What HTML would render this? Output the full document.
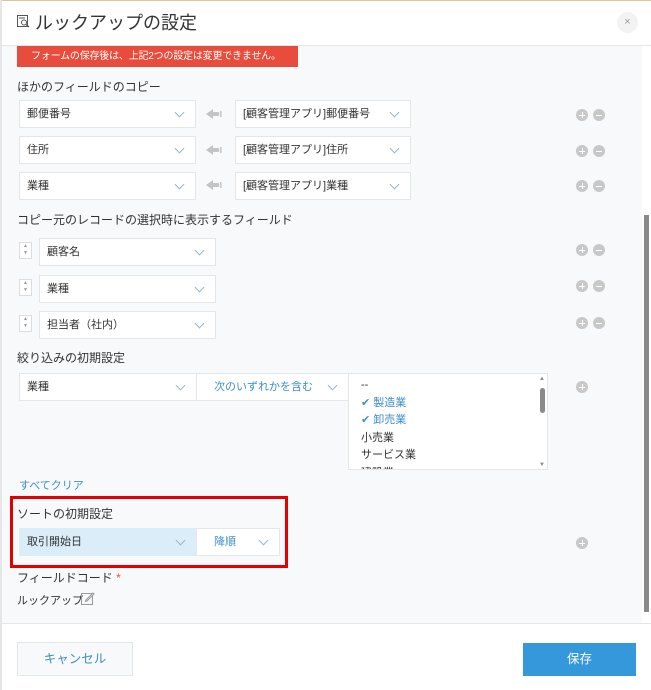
<!DOCTYPE html>
<html><head><meta charset="utf-8"><style>
*{box-sizing:border-box;margin:0;padding:0}
body{width:651px;height:690px;position:relative;overflow:hidden;background:#fff;font-family:"Liberation Sans","Noto Sans CJK JP",sans-serif;color:#333}
.a{position:absolute}
.body{left:2px;top:46px;width:640px;height:577px;background:#f7f9fa}
.lbl{font-size:12px;color:#333;white-space:nowrap}
.sel{position:absolute;background:#fff;border:1px solid #e3e7e8;height:28px;font-size:11px;line-height:26px;padding-left:7px;white-space:nowrap}
.sel:after{content:"";position:absolute;right:12px;top:8px;width:6px;height:6px;border-right:1px solid #9fb4c4;border-bottom:1px solid #9fb4c4;transform:rotate(45deg)}
.ic{position:absolute;width:12px;height:12px;border-radius:50%;background:#c8c8c8}
.ic:before{content:"";position:absolute;left:3px;top:5.5px;width:6px;height:1px;background:#fff}
.p:after{content:"";position:absolute;left:5.5px;top:3px;width:1px;height:6px;background:#fff}
.arr{position:absolute;width:16px;height:10px}
.st{position:absolute;width:13px;height:17px;border:1px solid #ddd;background:#fff;font-size:5px;line-height:7px;text-align:center;color:#999}
</style></head><body>
<div class="a" style="left:0;top:0;width:651px;height:1px;background:#d9c99a"></div>
<div class="a" style="left:0;top:0;width:2px;height:690px;background:#e6e6e6"></div>
<svg class="a" style="left:17px;top:15px" width="14" height="13" viewBox="0 0 14 13"><rect x="0.5" y="0.5" width="10" height="11" fill="none" stroke="#555"/><line x1="2" y1="3" x2="8" y2="3" stroke="#555"/><circle cx="7" cy="7.5" r="2.5" fill="#fff" stroke="#555"/><line x1="9" y1="9.5" x2="12" y2="12" stroke="#555" stroke-width="1.3"/></svg>
<div class="a" style="left:35px;top:9px;font-size:18px;color:#333">ルックアップの設定</div>
<div class="a" style="left:617px;top:12px;width:21px;height:21px;border-radius:50%;background:#f3f3f3;color:#999;font-size:11px;text-align:center;line-height:21px">×</div>
<div class="a" style="left:0;top:45px;width:651px;height:1px;background:#e6e6e6"></div>
<div class="a body"></div>
<div class="a" style="left:642px;top:46px;width:9px;height:577px;background:#fff"></div>
<div class="a" style="left:644px;top:215px;width:5px;height:397px;background:#8a8a8a"></div>
<div class="a" style="left:17px;top:46px;width:281px;height:21px;background:#e74c3c;color:#fff;font-size:10px;line-height:21px;padding-left:14px;white-space:nowrap;letter-spacing:-0.2px">フォームの保存後は、上記2つの設定は変更できません。</div>
<div class="a lbl" style="left:17px;top:78px">ほかのフィールドのコピー</div>

<div class="sel" style="left:19px;top:100px;width:177px">郵便番号</div>
<svg class="arr" style="left:206px;top:109px" viewBox="0 0 16 10"><path d="M0 5 L7 0 V10 Z" fill="#c4c4c4"/><rect x="7" y="3" width="6" height="4" fill="#c4c4c4"/><rect x="14" y="2" width="1.5" height="6" fill="#c4c4c4"/></svg>
<div class="sel" style="left:235px;top:100px;width:176px">[顧客管理アプリ]郵便番号</div>
<div class="ic p" style="left:576px;top:109px"></div><div class="ic" style="left:593px;top:109px"></div>

<div class="sel" style="left:19px;top:136px;width:177px">住所</div>
<svg class="arr" style="left:206px;top:145px" viewBox="0 0 16 10"><path d="M0 5 L7 0 V10 Z" fill="#c4c4c4"/><rect x="7" y="3" width="6" height="4" fill="#c4c4c4"/><rect x="14" y="2" width="1.5" height="6" fill="#c4c4c4"/></svg>
<div class="sel" style="left:235px;top:136px;width:176px">[顧客管理アプリ]住所</div>
<div class="ic p" style="left:576px;top:145px"></div><div class="ic" style="left:593px;top:145px"></div>

<div class="sel" style="left:19px;top:172px;width:177px">業種</div>
<svg class="arr" style="left:206px;top:180px" viewBox="0 0 16 10"><path d="M0 5 L7 0 V10 Z" fill="#c4c4c4"/><rect x="7" y="3" width="6" height="4" fill="#c4c4c4"/><rect x="14" y="2" width="1.5" height="6" fill="#c4c4c4"/></svg>
<div class="sel" style="left:235px;top:172px;width:176px">[顧客管理アプリ]業種</div>
<div class="ic p" style="left:576px;top:180px"></div><div class="ic" style="left:593px;top:180px"></div>

<div class="a lbl" style="left:17px;top:211px">コピー元のレコードの選択時に表示するフィールド</div>
<div class="st" style="left:19px;top:242px">▲<br>▼</div>
<div class="sel" style="left:39px;top:238px;width:177px">顧客名</div>
<div class="ic p" style="left:576px;top:244px"></div><div class="ic" style="left:593px;top:244px"></div>
<div class="st" style="left:19px;top:279px">▲<br>▼</div>
<div class="sel" style="left:39px;top:275px;width:177px">業種</div>
<div class="ic p" style="left:576px;top:280px"></div><div class="ic" style="left:593px;top:280px"></div>
<div class="st" style="left:19px;top:315px">▲<br>▼</div>
<div class="sel" style="left:39px;top:311px;width:177px">担当者（社内）</div>
<div class="ic p" style="left:576px;top:317px"></div><div class="ic" style="left:593px;top:317px"></div>

<div class="a lbl" style="left:17px;top:349px">絞り込みの初期設定</div>
<div class="sel" style="left:19px;top:373px;width:178px">業種</div>
<div class="sel" style="left:196px;top:373px;width:153px;color:#3e8ec8;padding-left:17px">次のいずれかを含む</div>
<div class="a" style="left:348px;top:373px;width:200px;height:97px;background:#fff;border:1px solid #e3e7e8;font-size:11px;line-height:17.5px;padding:3px 0 0 12px;overflow:hidden">
--<br><span style="color:#3e8ec8">✔ 製造業</span><br><span style="color:#3e8ec8">✔ 卸売業</span><br>小売業<br>サービス業<br>建設業
<div class="a" style="right:2px;top:14px;width:5px;height:25px;border-radius:3px;background:#8a8a8a"></div>
<div class="a" style="right:2px;top:1px;font-size:6px;line-height:8px;color:#888">▲</div>
<div class="a" style="right:2px;bottom:0;font-size:6px;line-height:8px;color:#888">▼</div>
</div>
<div class="ic p" style="left:576px;top:381px"></div>

<div class="a" style="left:19px;top:477px;font-size:11px;color:#3e8ec8">すべてクリア</div>
<div class="a" style="left:10px;top:496px;width:278px;height:72px;border:3px solid #e30000"></div>
<div class="a lbl" style="left:17px;top:505px">ソートの初期設定</div>
<div class="sel" style="left:19px;top:528px;width:178px;background:#dcedfa;border-color:#dcedfa">取引開始日</div>
<div class="sel" style="left:196px;top:528px;width:84px;color:#3e8ec8;padding-left:17px">降順</div>
<div class="ic p" style="left:576px;top:537px"></div>

<div class="a lbl" style="left:17px;top:569px">フィールドコード <span style="color:#e74c3c">*</span></div>
<div class="a" style="left:17px;top:592px;font-size:11px">ルックアップ</div>
<svg class="a" style="left:81px;top:591px" width="14" height="14" viewBox="0 0 14 14"><rect x="0.5" y="2.5" width="11" height="11" fill="none" stroke="#999"/><path d="M5 9 L12 2 L13 3 L6 10 L4.5 10.5 Z" fill="#fff" stroke="#999"/></svg>

<div class="a" style="left:0;top:623px;width:651px;height:1px;background:#e6e6e6"></div>
<div class="a" style="left:17px;top:642px;width:116px;height:34px;background:#f7f9fa;border:1px solid #e3e7e8;color:#3e8ec8;font-size:12.5px;text-align:center;line-height:32px">キャンセル</div>
<div class="a" style="left:523px;top:643px;width:113px;height:33px;background:#3498db;color:#fff;font-size:12.5px;text-align:center;line-height:33px">保存</div>
</body></html>
